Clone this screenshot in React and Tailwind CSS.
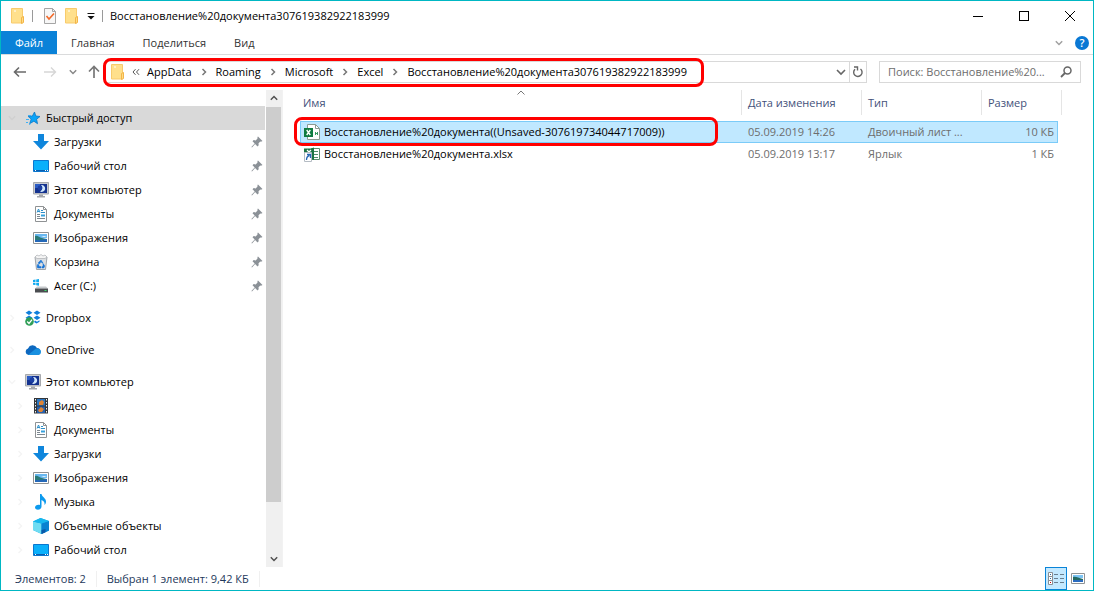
import { useState } from "react";
import clsx from "clsx";

const FolderIcon = () => (
  <svg viewBox="0 0 16 18" className="h-[18px] w-4 shrink-0" aria-hidden="true">
    <path d="M1.5 1.5h11v14.500H1.500z" fill="#ffe08c" stroke="#f8cb6c" />
    <path d="M11.500 16.500V10.500l2-1v6z" fill="#ffdd85" stroke="#f3b548" />
    <path d="M4 4h2" stroke="#fff" />
  </svg>
);

const PropertiesIcon = () => (
  <svg viewBox="0 0 16 18" className="h-[18px] w-4 shrink-0" aria-hidden="true">
    <path d="M2.500 1.500h8l3 3v12h-11z" fill="#f7f7f7" stroke="#a5a5a5" />
    <path d="M10.500 1.500v3h3" fill="none" stroke="#a5a5a5" />
    <path d="M4.500 9l2.500 3 5-5.500" fill="none" stroke="#f26a2a" strokeWidth="1.600" />
  </svg>
);

const StarIcon = () => (
  <svg viewBox="0 0 16 16" className="size-4 shrink-0" aria-hidden="true">
    <path d="M9.500 2l1.300 4 4.200.500-3.400 2.700.9 4.500-3.600-2.500-4.200 2.500 1.500-4.700-3-2.500 4.200-.500z" fill="#0aa4f8" stroke="#0b76c4" strokeWidth=".8" />
    <path d="M3 5.500h3M1 9.500h3M1 12.500h2M4 14.500l2-1" stroke="#3db2f5" />
  </svg>
);

const DownloadIcon = () => (
  <svg viewBox="0 0 16 16" className="size-4 shrink-0" aria-hidden="true">
    <path d="M5 0h6v7h5l-8 8.500L0 7h5z" fill="#0f86dc" />
  </svg>
);

const DesktopIcon = () => (
  <svg viewBox="0 0 16 16" className="size-4 shrink-0" aria-hidden="true">
    <path d="M.5 2.500h15v11H.5z" fill="#0ab0fb" stroke="#0b77cf" />
    <path d="M1 12.500h14" stroke="#0a5eb0" />
    <path d="M2 12.500h1M12 12.500h1M14 12.500h1" stroke="#fff" />
  </svg>
);

const ComputerIcon = () => (
  <svg viewBox="0 0 16 16" className="size-4 shrink-0" aria-hidden="true">
    <path d="M.5.500h15v11.500H.5z" fill="#c9ccd2" stroke="#a7a9ad" />
    <path d="M2 2h12v9H2z" fill="#14328f" />
    <path d="M2 2h5v4H2z" fill="#2b5bc4" />
    <path d="M8 3a3.500 3.500 0 1 1-1 6.500A4 4 0 0 0 8 3z" fill="#cfe6fb" />
    <circle cx="7" cy="6" r="2.400" fill="#1b3fa3" />
    <path d="M6 12.500h4V14h2v1.500H4V14h2z" fill="#a3a6aa" />
  </svg>
);

const DocumentIcon = () => (
  <svg viewBox="0 0 16 16" className="size-4 shrink-0" aria-hidden="true">
    <path d="M2.500.500h8l3 3v12h-11z" fill="#fff" stroke="#8f9294" />
    <path d="M10.500.500v3h3" fill="none" stroke="#8f9294" />
    <path d="M4 6.500l1.500-3.500L7 6.500M4.500 5.500h2M8 4.500h2M8 6.500h4" fill="none" stroke="#2d8fc9" />
    <path d="M4 8.500h3M4 10.500h3M4 12.500h8" stroke="#7c8790" />
    <path d="M8 8.500h4v2H8z" fill="#36a0dc" />
  </svg>
);

const PictureIcon = () => (
  <svg viewBox="0 0 16 16" className="size-4 shrink-0" aria-hidden="true">
    <path d="M.5 2.500h15v11H.5z" fill="#fff" stroke="#8f9294" />
    <path d="M2 4h12v4H2z" fill="#68b8f0" />
    <path d="M2 6c3-1 4 2 7 2l5 1v3H2z" fill="#2a7a78" />
    <path d="M2 10h5l7-1v3H2z" fill="#2468b8" />
    <path d="M8 7l3-1 3 1z" fill="#e8f4fc" />
  </svg>
);

const TrashIcon = () => (
  <svg viewBox="0 0 16 16" className="size-4 shrink-0" aria-hidden="true">
    <path d="M2 3h12l-1.500 12.500h-9z" fill="#dcdfe2" stroke="#a0a5aa" />
    <path d="M2 3l2-2 2 1 2-1.500L10 2l2-1 2 2-2 1.500H4z" fill="#f5f5f5" stroke="#b5b8bb" strokeWidth=".8" />
    <path d="M8 6l2 3H9l-1-1.400L6.500 10 5 9zM5 10l1.500 2.500H8V14H4.500L4 12zM10 9.500l1.800 2.500-1 2H9v-1.500h1z" fill="#1b76d6" stroke="#1b76d6" strokeWidth=".5" />
  </svg>
);

const DriveIcon = () => (
  <svg viewBox="0 0 16 16" className="size-4 shrink-0" aria-hidden="true">
    <path d="M0 2l2.500-.500V4H0zM3.200 1.400L6 1v3H3.200zM0 4.700h2.500v2.400L0 6.800zM3.200 4.700H6v3l-2.800-.500z" fill="#10a9ee" />
    <path d="M4 8.500h9l2 2H2z" fill="#c6c9cc" />
    <path d="M2 10.500h13v4H2z" fill="#4a4d50" />
    <path d="M11.500 12h2v1h-2z" fill="#38e06a" />
  </svg>
);

const DropboxIcon = () => (
  <svg viewBox="0 0 16 16" className="size-4 shrink-0" aria-hidden="true">
    <path d="M4 .500l3.500 2.300L4 5 .500 2.800zM12 .500l3.500 2.300L12 5 8.500 2.800zM4 5.500L7.500 7.700 4 10 .500 7.700zM12 5.500l3.500 2.200L12 10 8.500 7.700zM10 10.500l2 1.200 2.500-1.400v1.500L11.500 13.500 9 12z" fill="#0f7fdc" />
    <circle cx="4.500" cy="11.500" r="4.300" fill="#2f9e57" />
    <path d="M2.200 11.500l1.800 2 3-3.800" fill="none" stroke="#fff" strokeWidth="1.300" />
  </svg>
);

const OneDriveIcon = () => (
  <svg viewBox="0 0 16 16" className="size-4 shrink-0" aria-hidden="true">
    <path d="M3.500 13A3.400 3.400 0 0 1 3 6.400 5 5 0 0 1 12 6a3.600 3.600 0 0 1 1 7z" fill="#0d68bf" />
    <path d="M3 13l8-6.500c3-.500 5 1 5 3.300S14.500 13 13 13z" fill="#1990e0" />
  </svg>
);

const VideoIcon = () => (
  <svg viewBox="0 0 16 16" className="size-4 shrink-0" aria-hidden="true">
    <path d="M1 0h14v15.500H1z" fill="#33363a" />
    <path d="M4 1h8v6.500H4z" fill="#2a75c0" />
    <path d="M4 8.500h8V15H4z" fill="#245fae" />
    <path d="M6 4l3-2 2 2-1 3H6zM5 12l3-3 3 2-2 3H6z" fill="#e08433" />
    <path d="M2.500 1v14M13.500 1v14" stroke="#f0f0f0" strokeDasharray="1.500 1.500" />
  </svg>
);

const MusicIcon = () => (
  <svg viewBox="0 0 16 16" className="size-4 shrink-0" aria-hidden="true">
    <path d="M7 0h1.500c.5 3 4.500 4 4.500 7.500 0 1.500-.500 2.500-1.500 3.500.5-3-1-4-3-5v6.500C8.500 14.500 7 15.700 5 15.700S2 14.500 2 13.300s1.500-2.600 3.500-2.600c.6 0 1 0 1.500.3z" fill="#0c9aee" />
  </svg>
);

const CubeIcon = () => (
  <svg viewBox="0 0 16 16" className="size-4 shrink-0" aria-hidden="true">
    <path d="M0 3.500L7.500 0 16 3v9.500L8.500 16 0 12z" fill="#0ba8e4" />
    <path d="M0 3.500l8.500 2V16L0 12z" fill="#6fdcf2" />
    <path d="M8.500 5.500L16 3v9.500L8.500 16z" fill="#0882d0" />
    <path d="M0 3.500L7.500 0 16 3 8.500 5.500z" fill="#16b7ee" />
    <path d="M8.500 12l4-1v3.200L8.500 16z" fill="#0b58a8" />
  </svg>
);

const PinIcon = () => (
  <svg viewBox="0 0 12 12" className="size-3 shrink-0" aria-hidden="true">
    <path d="M7 .500l4.500 4.500-1.500.7-.7-.200L7.500 7.300l.2 2-1.200 1.200-2.400-2.400L1 11.500l-.6-.6L3.700 7.500 1.500 5.300l1.200-1.200 2 .3L6.500 2.500V1z" fill="#8b9197" />
  </svg>
);

const ExcelBinaryIcon = () => (
  <svg viewBox="0 0 16 16" className="size-4 shrink-0" aria-hidden="true">
    <path d="M3.500.500h8l4 4v11h-12z" fill="#fff" stroke="#8d9a92" />
    <path d="M11.500.500v4h4" fill="none" stroke="#8d9a92" />
    <path d="M0 4h9v9H0z" fill="#107c41" />
    <path d="M2.700 6l3.600 5M6.300 6l-3.600 5" stroke="#fff" strokeWidth="1.400" />
    <path d="M11.500 8v3M13.500 8v3M11.500 9.500h2" stroke="#3a9a63" />
  </svg>
);

const ExcelShortcutIcon = () => (
  <svg viewBox="0 0 16 16" className="size-4 shrink-0" aria-hidden="true">
    <path d="M7.500 2.500h8v11h-8z" fill="#fff" stroke="#5d8d70" />
    <path d="M10 5.500h4M10 8.500h4M10 11.500h4" stroke="#4f8f6b" />
    <path d="M0 2.500h7l3-1v12.500l-3-1H0z" fill="#1a7443" />
    <path d="M3 4l4 4M7 4L3 8" stroke="#fff" strokeWidth="1.200" />
    <path d="M.5 6.500h7v9h-7z" fill="#fff" stroke="#b5bcc4" />
    <path d="M2.500 14c0-2.500 1-4 3-4.500M3 8.500h3.500V12" fill="none" stroke="#2565b5" strokeWidth="1.300" />
  </svg>
);

const Chevron = ({ dir = "right", className }) => (
  <svg viewBox="0 0 8 8" className={clsx("size-2 shrink-0", className)} aria-hidden="true">
    <path
      d={{ right: "M2.500 1l3 3-3 3", down: "M.8 2.300L4 5.500l3.200-3.200", up: "M.8 5.700L4 2.500l3.200 3.200" }[dir]}
      fill="none"
      stroke="currentColor"
      strokeWidth="1.500"
    />
  </svg>
);

const groups = [
  {
    title: "Быстрый доступ",
    icon: StarIcon,
    open: true,
    pinned: true,
    items: [
      { label: "Загрузки", icon: DownloadIcon },
      { label: "Рабочий стол", icon: DesktopIcon },
      { label: "Этот компьютер", icon: ComputerIcon },
      { label: "Документы", icon: DocumentIcon },
      { label: "Изображения", icon: PictureIcon },
      { label: "Корзина", icon: TrashIcon },
      { label: "Acer (C:)", icon: DriveIcon },
    ],
  },
  { title: "Dropbox", icon: DropboxIcon, items: [] },
  { title: "OneDrive", icon: OneDriveIcon, items: [] },
  {
    title: "Этот компьютер",
    icon: ComputerIcon,
    open: true,
    items: [
      { label: "Видео", icon: VideoIcon },
      { label: "Документы", icon: DocumentIcon },
      { label: "Загрузки", icon: DownloadIcon },
      { label: "Изображения", icon: PictureIcon },
      { label: "Музыка", icon: MusicIcon },
      { label: "Объемные объекты", icon: CubeIcon },
      { label: "Рабочий стол", icon: DesktopIcon },
    ],
  },
];

const crumbs = ["AppData", "Roaming", "Microsoft", "Excel", "Восстановление%20документа307619382922183999"];

const files = [
  {
    name: "Восстановление%20документа((Unsaved-307619734044717009))",
    date: "05.09.2019 14:26",
    type: "Двоичный лист ...",
    size: "10 КБ",
    icon: ExcelBinaryIcon,
  },
  {
    name: "Восстановление%20документа.xlsx",
    date: "05.09.2019 13:17",
    type: "Ярлык",
    size: "1 КБ",
    icon: ExcelShortcutIcon,
  },
];

function TitleBar() {
  return (
    <header className="flex h-[30px] items-center justify-between">
      <div className="flex items-center gap-1.5 pl-[9px]">
        <FolderIcon />
        <span className="mr-[3px] h-3 w-px bg-[#9a9a9a]" />
        <button aria-label="Свойства">
          <PropertiesIcon />
        </button>
        <button aria-label="Новая папка">
          <FolderIcon />
        </button>
        <button aria-label="Настройка панели" className="w-2.5">
          <svg viewBox="0 0 10 10" className="size-2.5" aria-hidden="true">
            <path d="M1.500 2.500h7" stroke="#111" />
            <path d="M1.500 5h7L5 8.500z" fill="#111" />
          </svg>
        </button>
        <span className="h-3 w-px bg-[#9a9a9a]" />
        <h1 className="pl-px">Восстановление%20документа307619382922183999</h1>
      </div>
      <div className="flex h-full">
        <button aria-label="Свернуть" className="flex w-[46px] items-center justify-center">
          <span className="h-px w-2.5 bg-black" />
        </button>
        <button aria-label="Развернуть" className="flex w-[46px] items-center justify-center">
          <span className="size-2.5 border border-black" />
        </button>
        <button aria-label="Закрыть" className="flex w-[46px] items-center justify-center">
          <svg viewBox="0 0 10 10" className="size-2.5" aria-hidden="true">
            <path d="M0 0l10 10M10 0L0 10" stroke="#000" />
          </svg>
        </button>
      </div>
    </header>
  );
}

function Ribbon() {
  return (
    <nav className="flex h-6 items-stretch border-b border-[#dadbdc] text-[#333]">
      <button className="w-14 bg-[#0a82d8] text-white">Файл</button>
      <button className="px-3.5">Главная</button>
      <button className="px-3.5">Поделиться</button>
      <button className="px-3.5">Вид</button>
      <div className="ml-auto flex items-center gap-3 pr-1">
        <button aria-label="Развернуть ленту" className="text-[#a0a0a0]">
          <Chevron dir="down" />
        </button>
        <button
          aria-label="Справка"
          className="flex size-3.5 items-center justify-center rounded-full bg-[#0a78d4] font-semibold text-white"
        >
          ?
        </button>
      </div>
    </nav>
  );
}

function AddressRow() {
  return (
    <div className="flex h-[35px] items-center px-3 pb-px">
      <div className="flex items-center">
        <button aria-label="Назад">
          <svg viewBox="0 0 14 12" className="h-3 w-3.5" aria-hidden="true">
            <path d="M13 6H1.500M6 1.500L1.500 6 6 10.500" fill="none" stroke="#6a6a6a" strokeWidth="1.600" />
          </svg>
        </button>
        <button aria-label="Вперед" className="ml-4">
          <svg viewBox="0 0 14 12" className="h-3 w-3.5" aria-hidden="true">
            <path d="M1 6h11.500M8 1.500L12.500 6 8 10.500" fill="none" stroke="#d6d6d6" strokeWidth="1.400" />
          </svg>
        </button>
        <button aria-label="Последние расположения" className="ml-3">
          <Chevron dir="down" className="text-[#888]" />
        </button>
        <button aria-label="Вверх" className="ml-2.5">
          <svg viewBox="0 0 14 14" className="size-3.5" aria-hidden="true">
            <path d="M7 13V2M2 6.500L7 1.500l5 5" fill="none" stroke="#777" strokeWidth="1.700" />
          </svg>
        </button>
      </div>

      <div className="relative ml-[3px] flex h-[22px] min-w-0 flex-1 items-center border border-[#d9d9d9] pl-[5px]">
        <FolderIcon />
        <svg viewBox="0 0 8 8" className="ml-1.5 size-2 shrink-0" aria-hidden="true">
          <path d="M3.500 1.200L1 4l2.500 2.800M7 1.200L4.500 4 7 6.800" fill="none" stroke="#555" />
        </svg>
        <ol className="flex min-w-0 items-center pl-[7px]">
          {crumbs.map((crumb, i) => (
            <li key={crumb} className="flex items-center whitespace-nowrap">
              {i > 0 && <Chevron className="mx-2 text-[#777]" />}
              <a href="#">{crumb}</a>
            </li>
          ))}
        </ol>
        <button aria-label="Предыдущие расположения" className="ml-auto flex w-4 justify-center">
          <svg viewBox="0 0 10 8" className="h-2 w-2.5" aria-hidden="true">
            <path d="M1 2l4 4 4-4" fill="none" stroke="#666" strokeWidth="1.600" />
          </svg>
        </button>
        <button
          aria-label="Обновить"
          className="flex h-full w-[17px] items-center justify-center border-l border-[#d9d9d9]"
        >
          <svg viewBox="0 0 12 12" className="size-3" aria-hidden="true">
            <path d="M3 3.200A4.200 4.200 0 1 0 8.500 3" fill="none" stroke="#666" strokeWidth="1.400" />
            <path d="M2 1h3.500v3.500" fill="none" stroke="#666" strokeWidth="1.400" />
          </svg>
        </button>
        {/* highlight around the current path */}
        <span className="pointer-events-none absolute -top-1 -left-0.5 h-[29px] w-[601px] rounded-lg border-3 border-[#f00]" />
      </div>

      <label className="ml-3 flex h-[22px] w-[202px] items-center border border-[#d9d9d9] px-2">
        <input
          type="search"
          aria-label="Поиск"
          placeholder="Поиск: Восстановление%20..."
          className="min-w-0 flex-1 bg-transparent outline-none placeholder:text-[#6d6d6d]"
        />
        <svg viewBox="0 0 12 12" className="size-3 shrink-0" aria-hidden="true">
          <circle cx="7.500" cy="4.500" r="3.500" fill="none" stroke="#666" strokeWidth="1.500" />
          <path d="M5 7L1 11" stroke="#666" strokeWidth="1.800" />
        </svg>
      </label>
    </div>
  );
}

function TreeRow({ label, icon: Icon, level = 0, chevron, pinned, selected }) {
  return (
    <a
      href="#"
      className={clsx(
        "flex h-6 items-center pr-0.5",
        level === 0 ? "pl-[7px]" : "pl-[15px]",
        selected && "bg-[#d9d9d9]"
      )}
    >
      <span className={clsx("mr-[9px] w-2", selected ? "text-[#d0d0d0]" : "text-[#f5f5f5]")}>
        {chevron && <Chevron dir={chevron} />}
      </span>
      <Icon />
      <span className="ml-[5px] flex-1">{label}</span>
      {pinned && <PinIcon />}
    </a>
  );
}

function Sidebar() {
  return (
    <aside className="flex w-[281px] shrink-0">
      <nav className="flex flex-1 flex-col gap-2 pt-4 pb-1">
        {groups.map((group, i) => (
          <div key={group.title}>
            <TreeRow
              label={group.title}
              icon={group.icon}
              chevron={group.open ? "down" : "right"}
              selected={i === 0}
            />
            {group.items.map((item) => (
              <TreeRow
                key={item.label}
                label={item.label}
                icon={item.icon}
                level={1}
                pinned={group.pinned}
                chevron={group.pinned ? null : "right"}
              />
            ))}
          </div>
        ))}
      </nav>
      <div className="ml-px flex w-4 flex-col bg-[#f0f0f0] text-[#505050]">
        <button aria-label="Прокрутить вверх" className="flex h-4 items-center justify-center">
          <Chevron dir="up" />
        </button>
        <div className="flex-1 pt-px">
          <div className="mr-px h-[89%] bg-[#cdcdcd]" />
        </div>
        <button aria-label="Прокрутить вниз" className="flex h-4 items-center justify-center">
          <Chevron dir="down" />
        </button>
      </div>
    </aside>
  );
}

function FileTable() {
  const [selected, setSelected] = useState(0);

  return (
    <main className="relative min-w-0 flex-1 border-l border-[#f2f2f2] pl-[17px]">
      <table className="table-fixed border-separate border-spacing-0 text-left">
        <colgroup>
          <col className="w-[442px]" />
          <col className="w-[120px]" />
          <col className="w-[120px]" />
          <col className="w-[76px]" />
          <col className="w-1" />
        </colgroup>
        <thead className="text-[#43517a]">
          <tr>
            <th className="relative h-[31px] p-0 align-top font-normal">
              <div className="flex h-[25px] items-center border-r border-[#e5e5e5] pl-[3px]">Имя</div>
              <svg viewBox="0 0 8 5" className="absolute top-0 left-1/2 h-[5px] w-2 -translate-x-1/2" aria-hidden="true">
                <path d="M.5 4.500L4 1l3.500 3.500" fill="none" stroke="#777" />
              </svg>
            </th>
            <th className="p-0 align-top font-normal">
              <div className="flex h-[25px] items-center border-r border-[#e5e5e5] pl-1.5">Дата изменения</div>
            </th>
            <th className="p-0 align-top font-normal">
              <div className="flex h-[25px] items-center border-r border-[#e5e5e5] pl-1.5">Тип</div>
            </th>
            <th className="p-0 align-top font-normal">
              <div className="flex h-[25px] items-center pl-1.5">Размер</div>
            </th>
            <td className="p-0 align-top">
              <div className="h-[25px] border-r border-[#e5e5e5]" />
            </td>
          </tr>
        </thead>
        <tbody className="text-[#6d6d6d]">
          {files.map((file, i) => {
            const cell = i === selected ? "border-[#7bcbf8] bg-[#c0e8ff]" : "border-transparent";
            const Icon = file.icon;
            return (
              <tr key={file.name} onClick={() => setSelected(i)}>
                <td className={clsx("h-[22px] border-y border-l p-0 pl-[3px] text-black", cell)}>
                  <div className="flex items-center gap-1">
                    <Icon />
                    {file.name}
                  </div>
                </td>
                <td className={clsx("border-y p-0 pl-1.5", cell)}>{file.date}</td>
                <td className={clsx("border-y p-0 pl-1.5", cell)}>{file.type}</td>
                <td className={clsx("border-y border-r p-0 pr-[3px] text-right", cell)}>{file.size}</td>
                <td className="p-0" />
              </tr>
            );
          })}
        </tbody>
      </table>
      {/* highlight around the unsaved workbook */}
      <span className="pointer-events-none absolute top-[27px] left-[11px] h-[29px] w-[424px] rounded-lg border-3 border-[#f00]" />
    </main>
  );
}

function StatusBar() {
  return (
    <footer className="flex h-[23px] items-center pr-2 pl-3.5 text-[#1e395b]">
      <span className="border-r border-[#f0f0f0] pr-2.5">Элементов: 2</span>
      <span className="border-r border-[#f0f0f0] px-2.5">Выбран 1 элемент: 9,42 КБ</span>
      <div className="ml-auto flex items-center gap-1">
        <button
          aria-label="Таблица"
          aria-pressed="true"
          className="flex h-[23px] w-[22px] items-center justify-center border border-[#0a84d8] bg-[#c4e9ff]"
        >
          <svg viewBox="0 0 16 14" className="h-3.5 w-4" aria-hidden="true">
            <path d="M.5.500h4v4h-4zM.5 4.500h4v4h-4zM.5 8.500h4v4h-4z" fill="#fff" stroke="#8a8f94" />
            <path d="M2 2.500h1M2 6.500h1" stroke="#2a6a9a" />
            <path d="M2 10.500h1" stroke="#c00" />
            <path d="M6 2.500h4M12 2.500h4M6 6.500h4M12 6.500h4M6 10.500h4M12 10.500h4" stroke="#6a7f90" />
          </svg>
        </button>
        <button aria-label="Крупные значки">
          <svg viewBox="0 0 14 11" className="h-[11px] w-3.5" aria-hidden="true">
            <path d="M.5.500h13v10H.5z" fill="#fff" stroke="#8f9294" />
            <path d="M2 2h10v3H2z" fill="#7cc4f4" />
            <path d="M2 4c3-1 5 1 10 2v3H2z" fill="#246a62" />
            <path d="M2 7h10v2H2z" fill="#2b6cc0" />
          </svg>
        </button>
      </div>
    </footer>
  );
}

export default function App() {
  return (
    <div className="flex min-h-screen flex-col border border-[#00b7c3] bg-white font-['Open_Sans',sans-serif] text-[11px] leading-4 text-black">
      <TitleBar />
      <Ribbon />
      <AddressRow />
      <div className="flex flex-1">
        <Sidebar />
        <FileTable />
      </div>
      <StatusBar />
    </div>
  );
}
